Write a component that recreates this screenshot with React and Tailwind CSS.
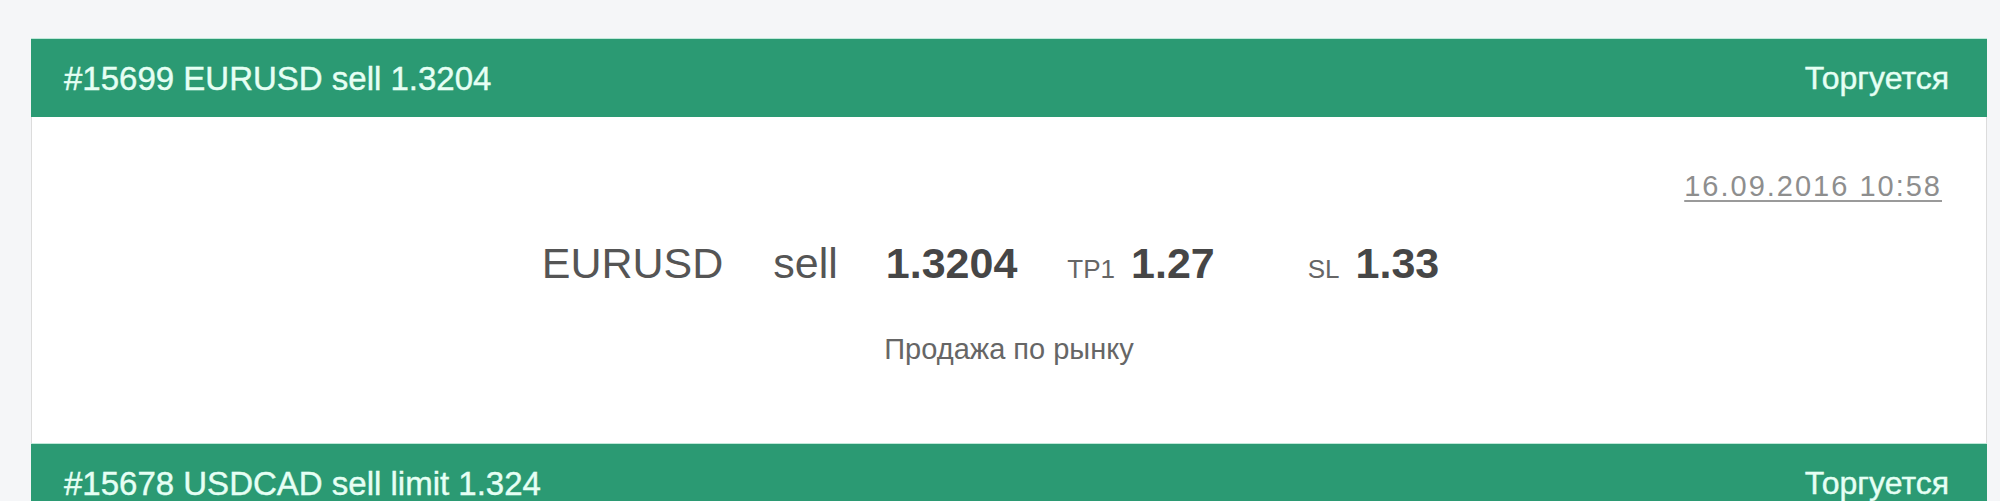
import React from 'react';

const font = { fontFamily: '"Liberation Sans", Arial, sans-serif' };

function SignalHeader({ title, status }) {
    return (
        <div className="h-[79px] flex items-center justify-between bg-[#2b9a73] border-t border-[#bfe9d9] pl-[33px] pr-[38px]">
            <span className="text-[33px] leading-none text-[#e6fff4] [-webkit-text-stroke:0.4px_#e6fff4]">{title}</span>
            <span className="text-[32px] leading-none text-[#e6fff4] [-webkit-text-stroke:0.4px_#e6fff4]">{status}</span>
        </div>
    );
}

function SignalCard({ signal }) {
    return (
        <div>
            <SignalHeader title={signal.title} status={signal.status} />
            {signal.pair && (
                <div className="bg-white border-x border-[#dcdcdc] pt-[55px] pb-[79px]">
                    <div className="flex justify-end pr-[44px]">
                        <a href="#" className="text-[29px] leading-none tracking-[2px] text-[#8e8e8e] underline underline-offset-[4px] decoration-[#9a9a9a]">
                            {signal.date}
                        </a>
                    </div>

                    {/* pair / side / entry / targets */}
                    <div className="mt-[41px] flex items-baseline justify-center pr-[37px] leading-none">
                        <span className="text-[43px] text-[#555]">{signal.pair}</span>
                        <span className="ml-[50px] text-[43px] text-[#555]">{signal.side}</span>
                        <span className="ml-[48px] text-[43px] font-bold text-[#464646]">{signal.price}</span>
                        <span className="ml-[50px] text-[26px] text-[#666]">TP1</span>
                        <span className="ml-[16px] text-[43px] font-bold text-[#464646]">{signal.tp}</span>
                        <span className="ml-[93px] text-[26px] text-[#666]">SL</span>
                        <span className="ml-[16px] text-[43px] font-bold text-[#464646]">{signal.sl}</span>
                    </div>

                    <div className="mt-[50px] text-center text-[29px] leading-none text-[#666]">
                        {signal.note}
                    </div>
                </div>
            )}
        </div>
    );
}

const signals = [
    {
        title: '#15699 EURUSD sell 1.3204',
        status: 'Торгуется',
        date: '16.09.2016 10:58',
        pair: 'EURUSD',
        side: 'sell',
        price: '1.3204',
        tp: '1.27',
        sl: '1.33',
        note: 'Продажа по рынку',
    },
    {
        title: '#15678 USDCAD sell limit 1.324',
        status: 'Торгуется',
    },
];

export default function App() {
    return (
        <div className="h-[501px] overflow-hidden bg-[#f5f6f8] pt-[38px] pl-[31px] pr-[13px]" style={font}>
            {signals.map((s) => (
                <SignalCard key={s.title} signal={s} />
            ))}
        </div>
    );
}
